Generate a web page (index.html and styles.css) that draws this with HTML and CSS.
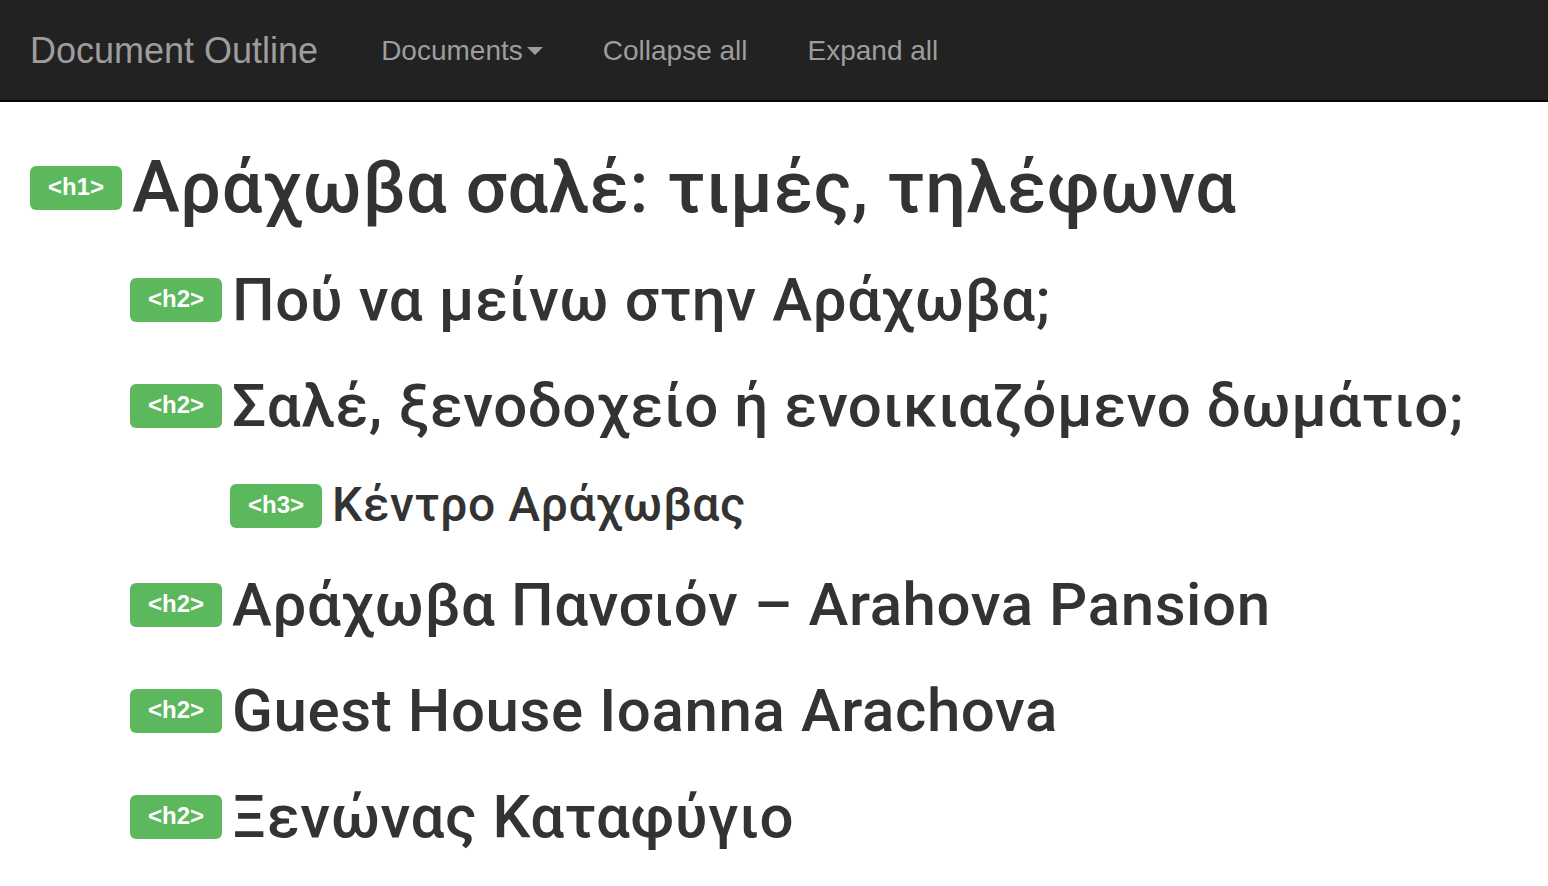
FILE: index.html
```html
<!DOCTYPE html>
<html lang="el">
<head>
<meta charset="utf-8">
<title>Document Outline</title>
<link rel="stylesheet" href="styles.css">
</head>
<body>
<nav class="navbar">
  <a class="brand" href="#">Document Outline</a>
  <ul class="nav">
    <li><a href="#">Documents<span class="caret"></span></a></li>
    <li><a href="#">Collapse all</a></li>
    <li><a href="#">Expand all</a></li>
  </ul>
</nav>
<main class="outline">
  <div class="item lvl1"><span class="tag">&lt;h1&gt;</span><h1>Αράχωβα σαλέ: τιμές, τηλέφωνα</h1></div>
  <div class="item lvl2"><span class="tag">&lt;h2&gt;</span><h2>Πού να μείνω στην Αράχωβα;</h2></div>
  <div class="item lvl2"><span class="tag">&lt;h2&gt;</span><h2>Σαλέ, ξενοδοχείο ή ενοικιαζόμενο δωμάτιο;</h2></div>
  <div class="item lvl3"><span class="tag">&lt;h3&gt;</span><h3>Κέντρο Αράχωβας</h3></div>
  <div class="item lvl2"><span class="tag">&lt;h2&gt;</span><h2>Αράχωβα Πανσιόν – Arahova Pansion</h2></div>
  <div class="item lvl2"><span class="tag">&lt;h2&gt;</span><h2>Guest House Ioanna Arachova</h2></div>
  <div class="item lvl2"><span class="tag">&lt;h2&gt;</span><h2>Ξενώνας Καταφύγιο</h2></div>
</main>
</body>
</html>
```
FILE: styles.css
```css
* { box-sizing: border-box; }
html, body { margin: 0; padding: 0; }
body {
  font-family: "Liberation Sans", Arial, Helvetica, sans-serif;
  background: #fff;
  color: #333;
  overflow: hidden;
}
.navbar {
  height: 102px;
  padding-top: 2px;
  background: #222;
  border-bottom: 2px solid #080808;
  display: flex;
  align-items: center;
}
.brand {
  color: #9d9d9d;
  text-decoration: none;
  font-size: 36px;
  padding: 0 33px 0 30px;
  line-height: 98px;
}
.nav {
  list-style: none;
  margin: 0;
  padding: 0;
  display: flex;
}
.nav a {
  display: flex;
  align-items: center;
  color: #9d9d9d;
  text-decoration: none;
  font-size: 28px;
  padding: 0 30px;
  line-height: 98px;
}
.caret {
  display: inline-block;
  width: 0;
  height: 0;
  margin-left: 4px;
  border-top: 8px solid #9d9d9d;
  border-left: 8px solid transparent;
  border-right: 8px solid transparent;
}
.outline {
  padding: 46px 30px 0 30px;
  display: flex;
  flex-direction: column;
  gap: 40px;
}
.item {
  display: flex;
  align-items: center;
  gap: 10px;
}
.lvl2 { margin-left: 100px; }
.lvl3 { margin-left: 200px; }
.tag {
  flex: none;
  background: #5cb85c;
  color: #fff;
  font-weight: bold;
  font-size: 24px;
  line-height: 24px;
  padding: 9px 18px 11px;
  border-radius: 6px;
  width: 92px;
  text-align: center;
}
h1, h2, h3 {
  margin: 0;
  font-family: Roboto, "Liberation Sans", Arial, sans-serif;
  font-weight: 500;
  line-height: 1.1;
  color: #333;
  white-space: nowrap;
  letter-spacing: 0.6px;
}
h1 { font-size: 72px; }
h2 { font-size: 60px; }
h3 { font-size: 48px; }
```
